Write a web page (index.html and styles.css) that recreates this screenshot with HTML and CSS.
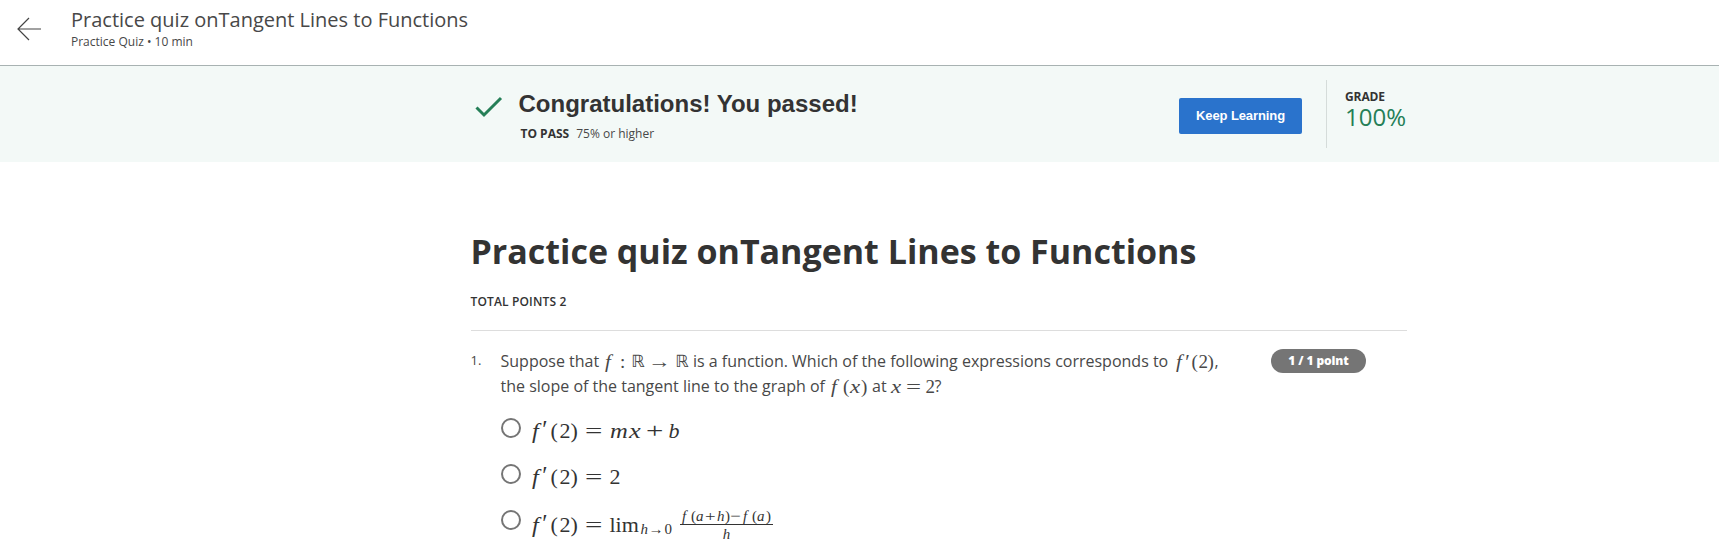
FILE: index.html
```html
<!DOCTYPE html>
<html lang="en">
<head>
<meta charset="utf-8">
<title>Practice quiz</title>
<link rel="stylesheet" href="styles.css">
</head>
<body>
<header class="top">
  <svg class="back" width="24" height="24" viewBox="0 0 24 24"><path d="M12 1 L1 12 L12 23 M1 12 H24"/></svg>
  <div class="top-text">
    <div class="top-title"><span>Practice quiz onTangent Lines to Functions</span></div>
    <div class="top-sub"><span>Practice Quiz • 10 min</span></div>
  </div>
</header>
<section class="banner">
  <div class="wrap banner-row">
    <svg class="check" width="28" height="22" viewBox="0 0 28 22"><path d="M1.5 11.5 L9 19 L26 2"/></svg>
    <div class="result">
      <div class="congrats"><span>Congratulations! You passed!</span></div>
      <div class="pass"><b>TO PASS</b><span>75% or higher</span></div>
    </div>
    <button class="keep">Keep Learning</button>
    <div class="grade">
      <div class="grade-label">GRADE</div>
      <div class="grade-value">100%</div>
    </div>
  </div>
</section>
<main class="wrap">
  <h1><span>Practice quiz onTangent Lines to Functions</span></h1>
  <div class="total"><span>TOTAL POINTS 2</span></div>
  <div class="question">
    <div class="num">1.</div>
    <div class="body">
      <div class="line l1"><span class="t1">Suppose that</span><span class="math m1"><i class="w16 fn">f</i><span class="w11">:</span><span class="w20 bb">ℝ</span><span class="w24 arrow">→</span><span class="w18 bb">ℝ</span></span><span class="t2">is a function. Which of the following expressions corresponds to</span><span class="math m2"><i class="w12 fn">f</i><span class="w5 pr">′</span><span class="w7">(</span><span class="w9">2</span><span class="w7">)</span></span><span>,</span></div>
      <div class="line l2"><span class="t3">the slope of the tangent line to the graph of</span><span class="math m3"><i class="w13 fn">f</i><span class="w7">(</span><i class="w11 wide">x</i><span class="w7">)</span></span><span class="t4">at</span><span class="math m4"><i class="w15 wide">x</i><span class="w20 eq">=</span><span class="w9">2</span></span><span>?</span></div>
      <div class="option"><span class="radio"></span><span class="math big"><i class="w13 fn">f</i><span class="w7 pr">′</span><span class="w9">(</span><span class="w11">2</span><span class="w15">)</span><span class="w24 eq">=</span><i class="w19 wide-m">m</i><i class="w18 wide">x</i><span class="w22 eq">+</span><i class="w11">b</i></span></div>
      <div class="option"><span class="radio"></span><span class="math big"><i class="w13 fn">f</i><span class="w7 pr">′</span><span class="w9">(</span><span class="w11">2</span><span class="w15">)</span><span class="w24 eq">=</span><span class="w11">2</span></span></div>
      <div class="option last"><span class="radio"></span><span class="math big"><i class="w13 fn">f</i><span class="w7 pr">′</span><span class="w9">(</span><span class="w11">2</span><span class="w15">)</span><span class="w24 eq">=</span><span class="lim">lim</span><span class="sub"><i class="w8">h</i><span class="w16 arrow">→</span><span class="w8">0</span></span></span><span class="math frac"><span class="top-half"><i class="w9">f</i><span class="w5">(</span><i class="w9">a</i><span class="w12 plus">+</span><i class="w8">h</i><span class="w5">)</span><span class="w13 plus">−</span><i class="w9">f</i><span class="w5">(</span><i class="w9">a</i><span class="w5">)</span></span><i class="den">h</i></span></div>
    </div>
    <div class="points"><span>1 / 1 point</span></div>
  </div>
</main>
</body>
</html>
```
FILE: styles.css
```css
* { box-sizing: border-box; }
body { margin: 0; background: #fff; color: #333; font-family: "Open Sans", sans-serif; overflow: hidden; height: 547px; }
.top { height: 66px; border-bottom: 1px solid #a8b2b2; display: flex; padding: 17px 0 0 17px; }
.back { fill: none; stroke: #444; stroke-width: 1.2; flex: none; }
.top-text { margin: -11px 0 0 30px; white-space: nowrap; }
.top-title { font-size: 20px; line-height: 28px; font-weight: 400; color: #484848; }
.top-sub { font-size: 12px; line-height: 16px; font-weight: 400; color: #484848; }
.banner { height: 96px; background: #f3f9f7; }
.wrap { width: 936px; margin-left: 470.5px; }
.banner-row { display: flex; white-space: nowrap; }
.check { margin: 30px 0 0 4px; fill: none; stroke: #257f57; stroke-width: 3; flex: none; }
.result { width: 676.5px; padding: 22px 0 0 16px; flex: none; }
.congrats { font: bold 24px/32px "Liberation Sans", Arial, sans-serif; }
.pass { display: flex; gap: 7px; margin: 6px 0 0 2px; font-size: 12px; line-height: 16px; }
.pass span { color: #484848; }
.keep { width: 123px; height: 36px; margin-top: 32px; border: 0; border-radius: 2px; background: #2a73cc; color: #fff; font: bold 13px "Liberation Sans", Arial, sans-serif; letter-spacing: -0.1px; padding: 0 0 2px; flex: none; }
.grade { height: 68px; margin: 14px 0 0 24px; border-left: 1px solid #d5dcda; padding: 9px 0 0 18px; }
.grade-label { font-size: 12px; line-height: 16px; font-weight: 700; letter-spacing: -0.1px; }
.grade-value { font-size: 24px; line-height: 24px; color: #257f57; }
h1 { margin: 67px 0 0; font-size: 34px; line-height: 44px; font-weight: 700; white-space: nowrap; }
.total { height: 58px; padding-top: 20px; font-size: 12px; line-height: 18px; font-weight: 600; letter-spacing: 0.15px; border-bottom: 1px solid #ddd; }
.question { display: flex; padding-top: 18px; }
.num { width: 30px; font-size: 13px; line-height: 23px; color: #484848; flex: none; }
.body { width: 770.5px; flex: none; }
.line { height: 25px; line-height: 25px; font-size: 16px; white-space: nowrap; display: flex; color: #484848; }
.line > span { flex: none; }
.t1 { width: 103.5px; }
.t2 { width: 481.5px; }
.t3 { width: 329.5px; }
.t4 { width: 18.5px; }
.math { font-family: "Liberation Serif", serif; font-size: 19px; display: flex; white-space: nowrap; }
.math > *, .sub > *, .top-half > * { flex: none; text-align: left; }
.bb { font-family: "DejaVu Sans", sans-serif; font-size: 17px; }
.m1 { width: 89px; }
.m3 { margin-right: 4px; }
.fn { transform: translateX(1px) scaleX(1.1); transform-origin: 0 50%; }
.pr { transform: translateX(-1.5px) scale(1.1); }
.eq { transform: scaleX(1.4); transform-origin: 0 50%; }
.big .eq { position: relative; left: -1px; }
.plus { transform: scaleX(1.25); transform-origin: 0 50%; }
.wide { transform: scaleX(1.2); transform-origin: 0 50%; }
.wide-m { transform: scaleX(1.12); transform-origin: 0 50%; }
.m1 .arrow { transform: translateX(-3px) scaleX(1.2); transform-origin: 0 50%; }
.option { height: 46px; display: flex; }
.l2 + .option { margin-top: 19px; }
.radio { width: 20px; height: 20px; border: 2px solid #757575; border-radius: 50%; flex: none; }
.big { font-size: 22px; line-height: 28px; margin: -1px 0 0 10px; }
.option.last .big { margin-top: 1px; }
.lim { width: 31px; }
.sub { font-size: 15px; display: flex; padding-top: 4px; }
.frac { flex-direction: column; align-items: center; font-size: 15px; margin: -2px 0 0 7.5px; }
.top-half { display: flex; height: 17px; line-height: 16px; border-bottom: 1px solid #333; width: 93px; padding-left: 2px; }
.den { line-height: 18px; }
.w5 { width: 5px; } .w7 { width: 7px; } .w8 { width: 8px; } .w9 { width: 9px; }
.w11 { width: 11px; } .w12 { width: 12px; } .w13 { width: 13px; }
.w15 { width: 15px; } .w16 { width: 16px; } .w18 { width: 18px; }
.w19 { width: 19px; } .w20 { width: 20px; } .w22 { width: 22px; } .w24 { width: 24px; }
.points { width: 95px; height: 24px; border-radius: 12px; background: #757575; color: #fff; font-size: 12px; line-height: 23px; font-weight: 800; letter-spacing: -0.1px; text-align: center; }
```
